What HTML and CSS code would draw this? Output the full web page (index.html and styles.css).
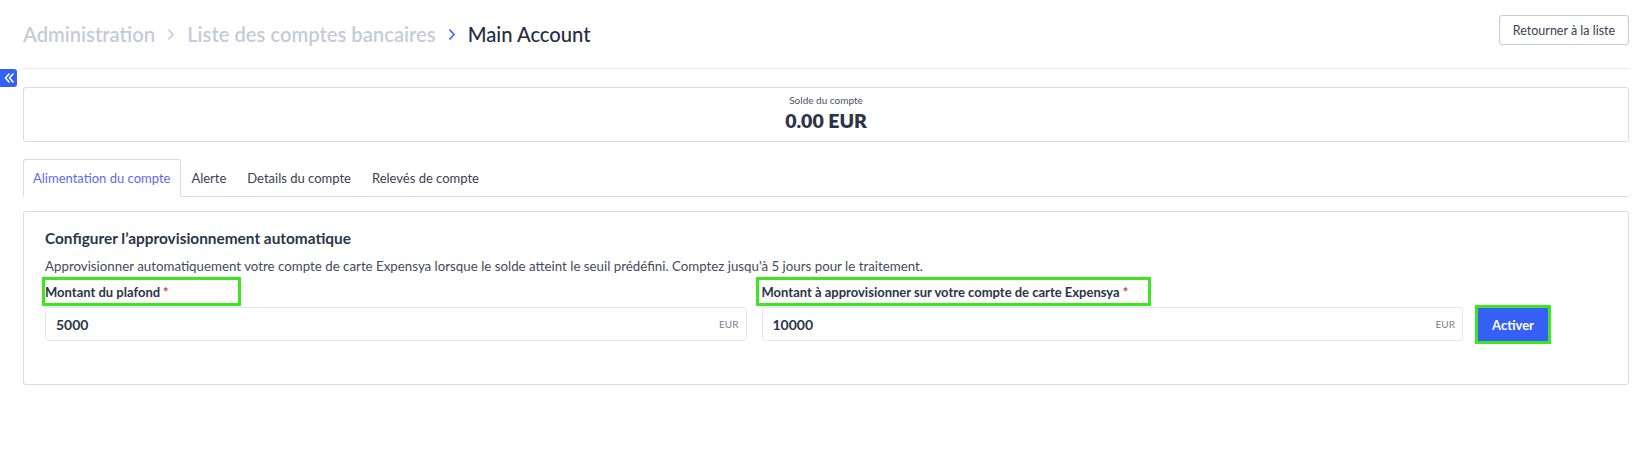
FILE: index.html
```html
<!DOCTYPE html>
<html lang="fr">
<head>
<meta charset="utf-8">
<title>Main Account</title>
<link rel="stylesheet" href="styles.css">
</head>
<body>
<div class="page">
  <header class="topbar">
    <nav class="crumbs">
      <span class="crumb">Administration</span>
      <svg class="sep" width="8" height="13" viewBox="0 0 8 13"><path d="M1.5 1.5 L6 6.5 L1.5 11.5" fill="none" stroke="#c3c8d6" stroke-width="1.4"/></svg>
      <span class="crumb">Liste des comptes bancaires</span>
      <svg class="sep" width="8" height="13" viewBox="0 0 8 13"><path d="M1.5 1.5 L6 6.5 L1.5 11.5" fill="none" stroke="#3560f2" stroke-width="1.6"/></svg>
      <span class="crumb current">Main Account</span>
    </nav>
    <button class="btn-back">Retourner à la liste</button>
  </header>

  <button class="sidebar-toggle" aria-label="Réduire">
    <svg width="12" height="12" viewBox="0 0 12 12"><path d="M6 2 L2.5 6 L6 10 M10 2 L6.5 6 L10 10" fill="none" stroke="#fff" stroke-width="1.6" stroke-linecap="round" stroke-linejoin="round"/></svg>
  </button>

  <section class="balance">
    <div class="balance-label">Solde du compte</div>
    <div class="balance-value">0.00 EUR</div>
  </section>

  <ul class="tabs">
    <li class="tab active">Alimentation du compte</li>
    <li class="tab">Alerte</li>
    <li class="tab">Details du compte</li>
    <li class="tab">Relevés de compte</li>
  </ul>

  <section class="panel">
    <h2 class="panel-title">Configurer l’approvisionnement automatique</h2>
    <p class="panel-desc">Approvisionner automatiquement votre compte de carte Expensya lorsque le solde atteint le seuil prédéfini. Comptez jusqu'à 5 jours pour le traitement.</p>
    <div class="form-row">
      <div class="field">
        <label class="field-label first">Montant du plafond<span class="req">*</span></label>
        <div class="input">
          <span class="input-value">5000</span>
          <span class="input-unit">EUR</span>
        </div>
      </div>
      <div class="field">
        <label class="field-label second">Montant à approvisionner sur votre compte de carte Expensya<span class="req">*</span></label>
        <div class="input">
          <span class="input-value">10000</span>
          <span class="input-unit">EUR</span>
        </div>
      </div>
      <div class="action">
        <button class="btn-primary">Activer</button>
      </div>
    </div>
  </section>
</div>
</body>
</html>
```

FILE: styles.css
```css
* { box-sizing: border-box; }
html, body { margin: 0; background: #fff; }
body {
  font-family: "Lato", "Open Sans", "Liberation Sans", sans-serif;
  color: #3b4050;
}
.page {
  position: relative;
  padding: 0 17px 0 23px;
}
.topbar {
  height: 69px;
  display: flex;
  align-items: flex-start;
  justify-content: space-between;
  border-bottom: 1px solid #e9e9ec;
}
.crumbs {
  display: flex;
  align-items: center;
  gap: 12px;
  margin-top: 22px;
  font-size: 20.2px;
  line-height: 24px;
  font-weight: 600;
}
.crumb { color: #c6cbd9; }
.crumb.current { color: #1f2d43; font-weight: 500; }
.sep { display: block; }
.btn-back {
  margin-top: 15px;
  width: 130px;
  height: 30px;
  border: 1px solid #c9ccd2;
  border-radius: 3px;
  background: #fff;
  font-family: inherit;
  font-size: 12.5px;
  color: #3a4150;
  padding: 0;
}
.sidebar-toggle {
  position: absolute;
  left: 0;
  top: 69px;
  width: 17px;
  height: 18px;
  padding: 0;
  border: 0;
  border-radius: 0 3px 3px 0;
  background: #3560f2;
  display: flex;
  align-items: center;
  justify-content: center;
}
.balance {
  margin-top: 18px;
  height: 55px;
  border: 1px solid #dcdcdf;
  border-radius: 3px;
  text-align: center;
  padding-top: 6px;
}
.balance-label {
  font-size: 10px;
  line-height: 13px;
  color: #4a4f63;
}
.balance-value {
  font-size: 19.5px;
  line-height: 23px;
  font-weight: 800;
  color: #2a3548;
  margin-top: 2px;
}
.tabs {
  list-style: none;
  margin: 17px 0 0;
  padding: 0;
  display: flex;
  height: 38px;
  border-bottom: 1px solid #dcdcdf;
}
.tab {
  padding: 0 10px 0 9px;
  font-size: 13px;
  line-height: 36px;
  color: #3b4050;
  border: 1px solid transparent;
  border-radius: 3px 3px 0 0;
  margin-bottom: -1px;
}
.tab.active {
  color: #5b6bf0;
  border-color: #dcdcdf;
  border-bottom-color: #fff;
  background: #fff;
}
.panel {
  margin-top: 14px;
  height: 174px;
  border: 1px solid #dcdcdf;
  border-radius: 3px;
  padding: 16px 77px 0 21px;
}
.panel-title {
  margin: 0;
  font-size: 15.4px;
  line-height: 20px;
  font-weight: 700;
  color: #2a3548;
}
.panel-desc {
  margin: 9px 0 0;
  font-size: 13.3px;
  line-height: 18px;
  color: #454a5b;
}
.form-row {
  display: flex;
  align-items: flex-end;
  gap: 15px;
  margin-top: 2px;
}
.field { flex: 1; min-width: 0; }
.field-label {
  display: block;
  height: 29px;
  border: 3px solid #3ee61f;
  font-size: 13px;
  line-height: 25px;
  font-weight: 700;
  color: #2a3548;
  white-space: nowrap;
}
.field-label.first { width: 199px; margin-left: -3px; padding-left: 0; }
.field-label.second { width: 395px; margin-left: -6px; padding-left: 3px; }
.req { color: #d63c3c; margin-left: 3px; }
.input {
  margin-top: 1px;
  height: 34px;
  border: 1px solid #e4e6ef;
  border-radius: 4px;
  display: flex;
  align-items: center;
  justify-content: space-between;
  padding: 0 7px 0 10px;
}
.input-value {
  font-size: 14px;
  font-weight: 700;
  color: #2a3548;
}
.input-unit {
  font-size: 10px;
  color: #7a8091;
}
.action {
  margin-left: -3px;
  margin-bottom: -3px;
}
.btn-primary {
  display: block;
  width: 76px;
  height: 39px;
  border: 3px solid #3ee61f;
  background: #3560f5;
  color: #fff;
  font-family: inherit;
  font-size: 13px;
  font-weight: 700;
  padding: 0;
}
```
